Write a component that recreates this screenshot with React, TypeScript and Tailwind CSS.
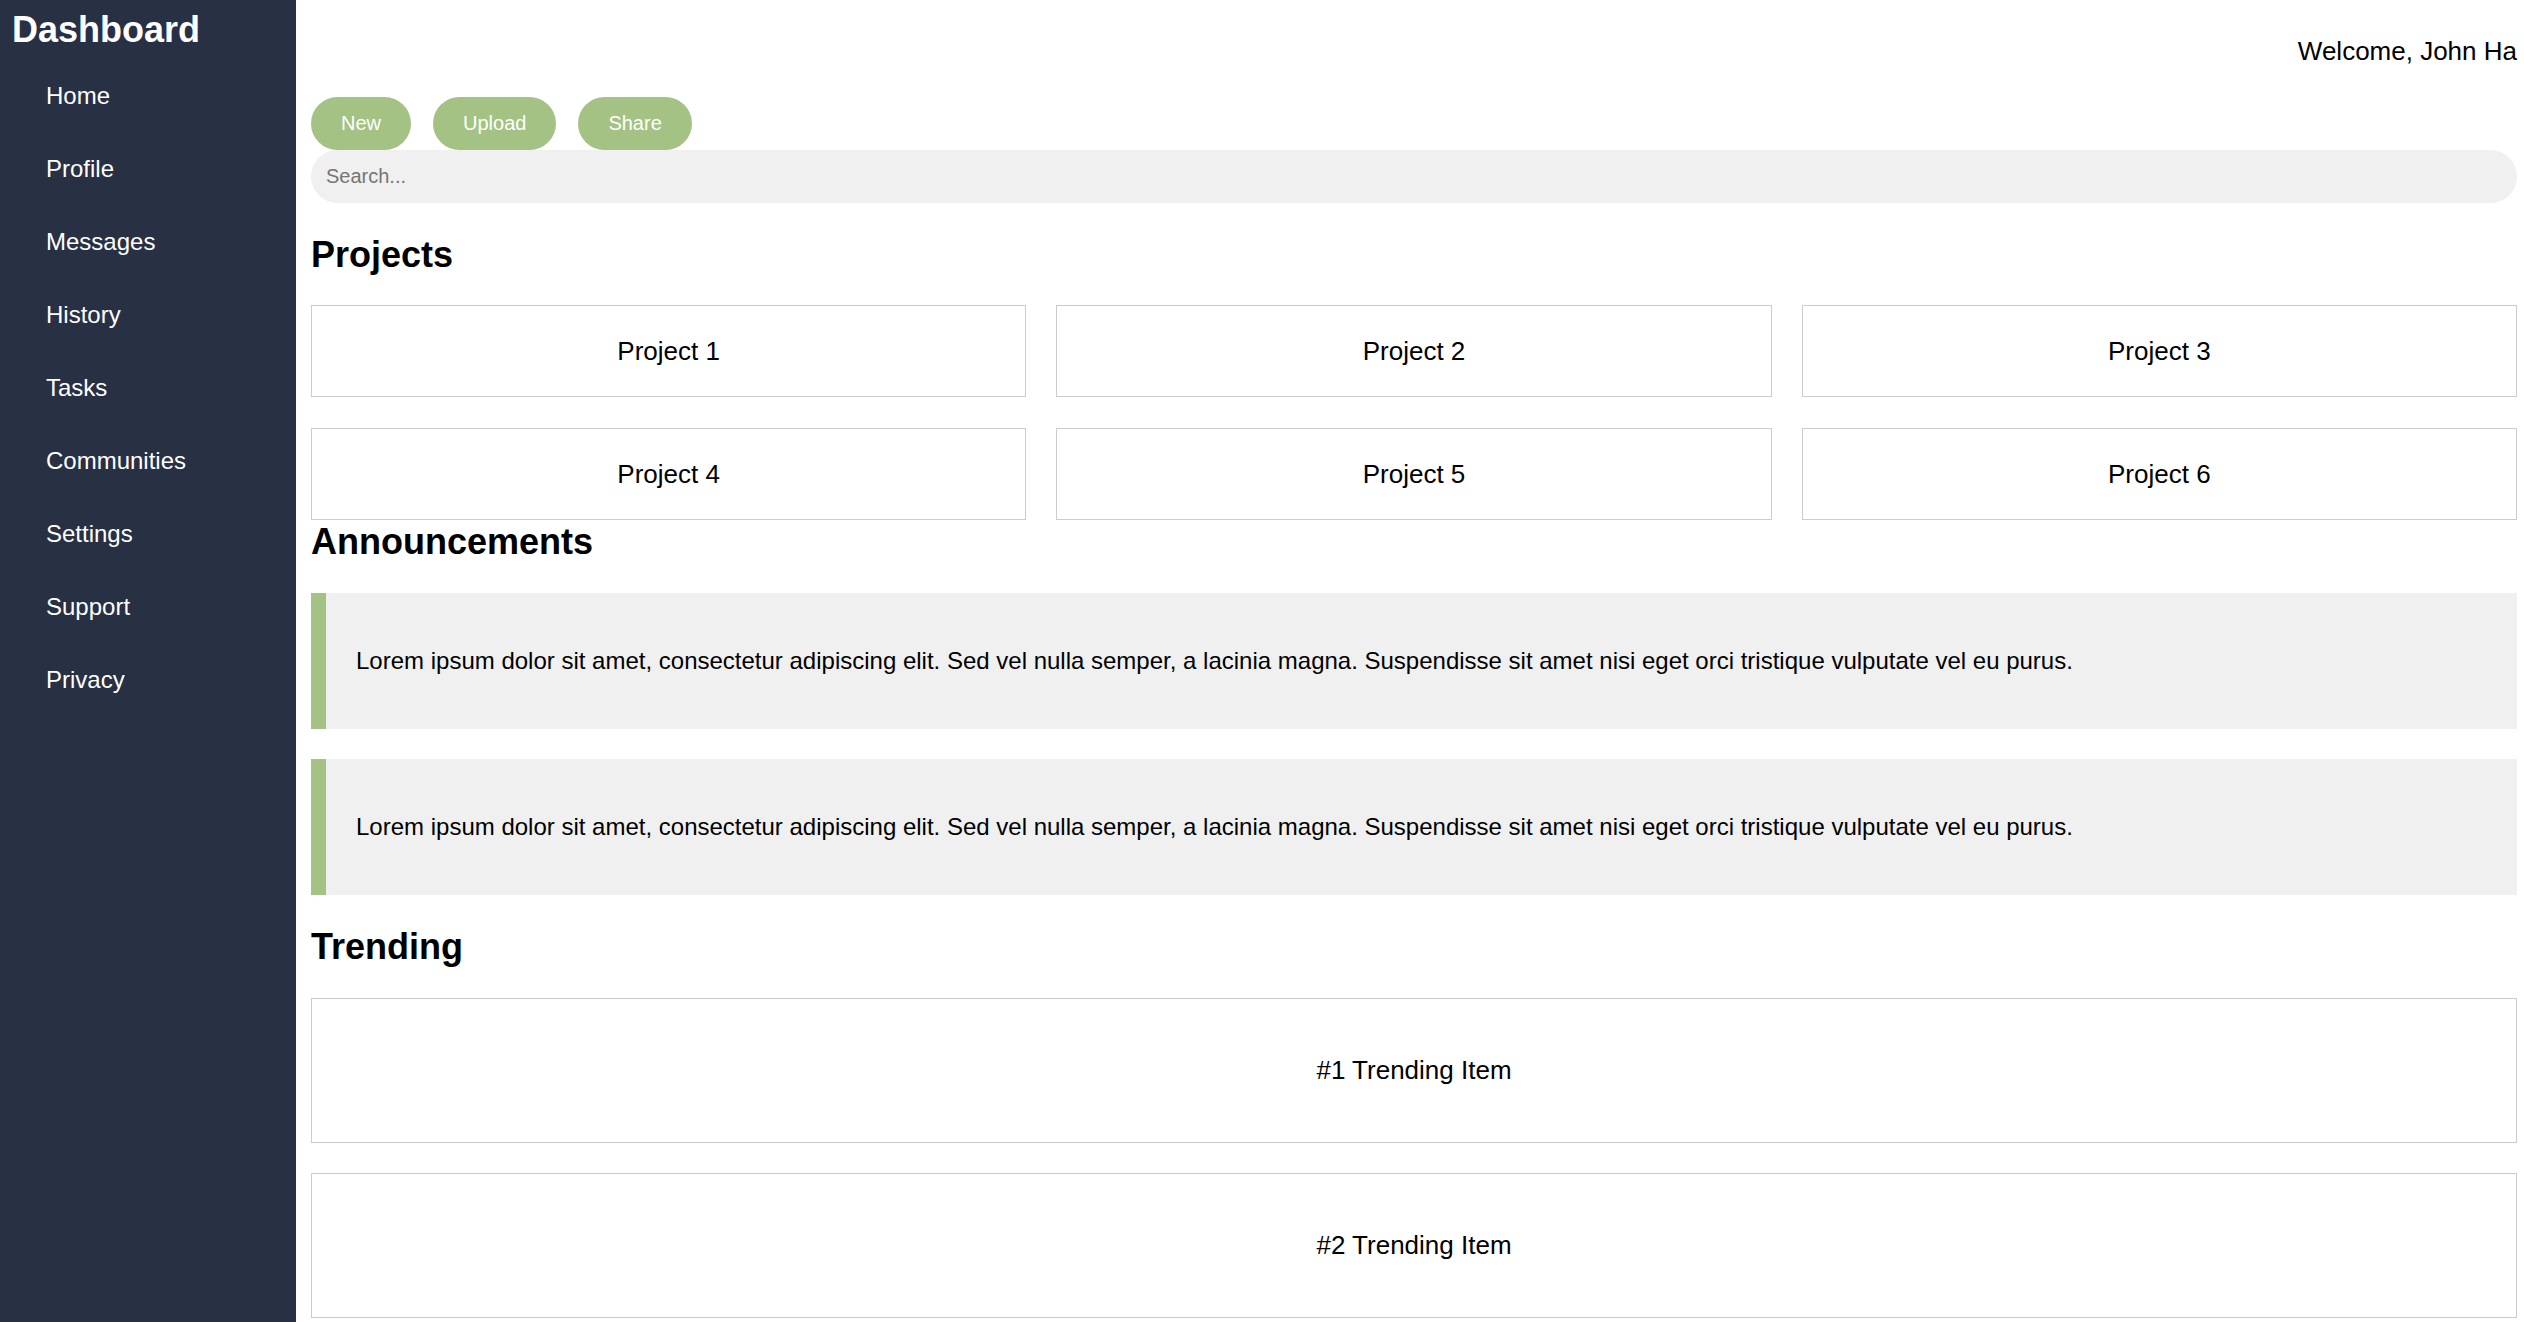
import React from "react"

const navItems = [
  "Home",
  "Profile",
  "Messages",
  "History",
  "Tasks",
  "Communities",
  "Settings",
  "Support",
  "Privacy",
]

const projects = ["Project 1", "Project 2", "Project 3", "Project 4", "Project 5", "Project 6"]

const announcements = [
  "Lorem ipsum dolor sit amet, consectetur adipiscing elit. Sed vel nulla semper, a lacinia magna. Suspendisse sit amet nisi eget orci tristique vulputate vel eu purus.",
  "Lorem ipsum dolor sit amet, consectetur adipiscing elit. Sed vel nulla semper, a lacinia magna. Suspendisse sit amet nisi eget orci tristique vulputate vel eu purus.",
]

const trending = ["#1 Trending Item", "#2 Trending Item"]

const Sidebar: React.FC = () => {
  return (
    <aside className="w-[296px] shrink-0 bg-[#283044] pl-[12px] pt-[10px] text-white">
      <h1 className="mb-[9px] text-[36px] font-bold leading-[40px]">Dashboard</h1>
      <ul>
        {navItems.map((item) => (
          <li key={item} className="flex h-[73px] items-center pl-[34px] text-[24px] leading-[28px]">
            <a href="#">{item}</a>
          </li>
        ))}
      </ul>
    </aside>
  )
}

const SectionTitle: React.FC<{ children: React.ReactNode }> = ({ children }) => (
  <h2 className="text-[36px] font-bold leading-[40px] text-black">{children}</h2>
)

const App: React.FC = () => {
  return (
    <div className="flex min-h-screen bg-white font-['Liberation_Sans',Arial,sans-serif]">
      <Sidebar />
      <main className="flex-1 pl-[15px] pr-[7px] text-black">
        <header className="flex justify-end pt-[36px]">
          <span className="text-[26px] leading-[30px]">Welcome, John Ha</span>
        </header>

        <div className="mt-[31px] flex gap-[22px]">
          {["New", "Upload", "Share"].map((label) => (
            <button
              key={label}
              className="h-[53px] rounded-full bg-[#a3c283] px-[30px] text-[20px] leading-[23px] text-white"
            >
              {label}
            </button>
          ))}
        </div>
        <input
          type="text"
          placeholder="Search..."
          className="block h-[53px] w-full rounded-full bg-[#f0f0f0] pl-[15px] text-[20px] outline-none placeholder:text-[#757575]"
        />

        <section className="mt-[32px]">
          <SectionTitle>Projects</SectionTitle>
          <div className="mt-[30px] grid grid-cols-3 gap-x-[30px] gap-y-[31px]">
            {projects.map((p) => (
              <div
                key={p}
                className="flex h-[92px] items-center justify-center border border-[#cccccc] text-[26px]"
              >
                {p}
              </div>
            ))}
          </div>
        </section>

        <section className="pt-[2px]">
          <SectionTitle>Announcements</SectionTitle>
          <div className="mt-[31px] flex flex-col gap-[30px]">
            {announcements.map((text, i) => (
              <div
                key={i}
                className="border-l-[15px] border-[#a3c283] bg-[#f0f0f0] py-[54px] pl-[30px] pr-[20px] text-[24px] leading-[28px]"
              >
                {text}
              </div>
            ))}
          </div>
        </section>

        <section className="mt-[32px]">
          <SectionTitle>Trending</SectionTitle>
          <div className="mt-[31px] flex flex-col gap-[30px]">
            {trending.map((t) => (
              <div
                key={t}
                className="flex h-[145px] items-center justify-center border border-[#cccccc] text-[26px]"
              >
                {t}
              </div>
            ))}
          </div>
        </section>
      </main>
    </div>
  )
}

export default App
